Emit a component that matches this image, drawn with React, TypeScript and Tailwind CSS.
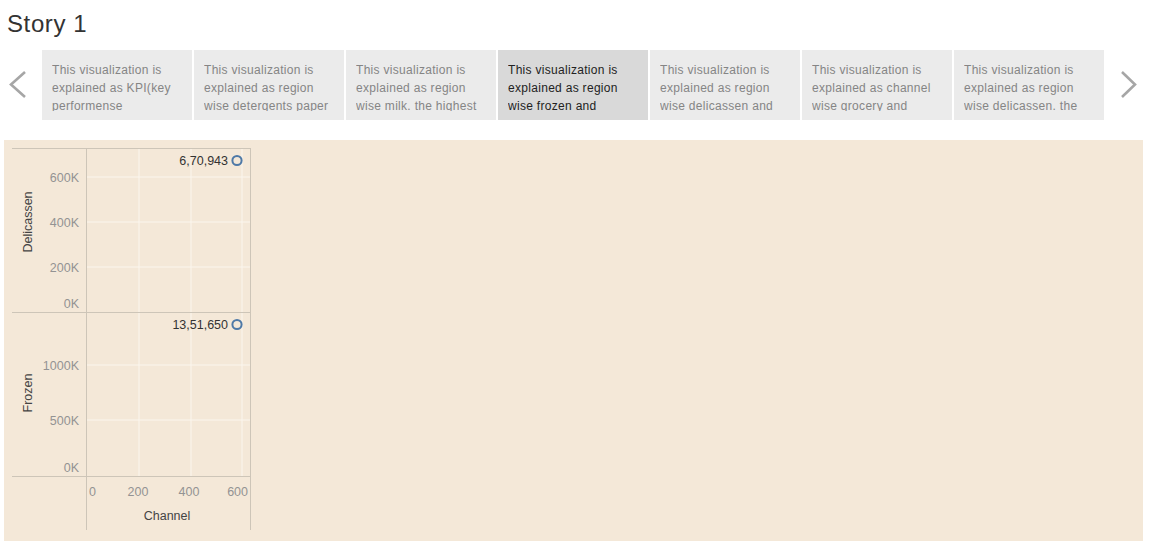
const TABS = [
  "This visualization is explained as KPI(key performense indicators) of the dataset",
  "This visualization is explained as region wise detergents paper and grocery",
  "This visualization is explained as region wise milk. the highest value",
  "This visualization is explained as region wise frozen and delicassen values",
  "This visualization is explained as region wise delicassen and fresh values",
  "This visualization is explained as channel wise grocery and detergents paper values",
  "This visualization is explained as region wise delicassen. the highest",
];

const SELECTED = 3;

function Arrow({ dir }: { dir: "left" | "right" }) {
  return (
    <svg width={18} height={30} viewBox="0 0 18 30" className="block">
      <polyline
        points={dir === "left" ? "16,2 2,14.5 16,27" : "2,2 15,14.5 2,27"}
        fill="none"
        stroke="#a6a6a6"
        strokeWidth={2.6}
      />
    </svg>
  );
}

function Chart() {
  // coordinates are page coords minus the panel origin (4, 140)
  const X = (v: number) => v - 4;
  const Y = (v: number) => v - 140;
  const axis = "#cdc5b8";
  const grid = "#fbf6ee";
  const tick = "#939393";
  const font = "'Liberation Sans', Arial, sans-serif";

  return (
    <svg width={260} height={401} className="block" style={{ fontFamily: font }}>
      {/* white gridlines */}
      {[177, 222, 267, 365, 420].map((y) => (
        <line key={y} x1={X(86)} x2={X(250)} y1={Y(y)} y2={Y(y)} stroke={grid} strokeWidth={1} />
      ))}
      {[139, 191, 242].map((x) => (
        <line key={x} x1={X(x)} x2={X(x)} y1={Y(148)} y2={Y(476)} stroke={grid} strokeWidth={1} />
      ))}

      {/* frame */}
      <line x1={X(12)} x2={X(250)} y1={Y(148.5)} y2={Y(148.5)} stroke={axis} />
      <line x1={X(12)} x2={X(250)} y1={Y(312.5)} y2={Y(312.5)} stroke={axis} />
      <line x1={X(12)} x2={X(250)} y1={Y(476.5)} y2={Y(476.5)} stroke={axis} />
      <line x1={X(86.5)} x2={X(86.5)} y1={Y(148)} y2={Y(530)} stroke={axis} />
      <line x1={X(250.5)} x2={X(250.5)} y1={Y(148)} y2={Y(530)} stroke={axis} />

      {/* y ticks */}
      {[
        ["600K", 177],
        ["400K", 222],
        ["200K", 267],
        ["0K", 303],
        ["1000K", 365],
        ["500K", 420],
        ["0K", 467],
      ].map(([t, y]) => (
        <text key={`${t}-${y}`} x={X(79)} y={Y(Number(y)) + 4.5} textAnchor="end" fontSize={12.5} fill={tick}>
          {t}
        </text>
      ))}

      {/* x ticks */}
      <text x={X(89)} y={Y(491) + 4.5} fontSize={12.5} fill={tick}>0</text>
      <text x={X(138)} y={Y(491) + 4.5} textAnchor="middle" fontSize={12.5} fill={tick}>200</text>
      <text x={X(189)} y={Y(491) + 4.5} textAnchor="middle" fontSize={12.5} fill={tick}>400</text>
      <text x={X(248)} y={Y(491) + 4.5} textAnchor="end" fontSize={12.5} fill={tick}>600</text>

      {/* axis titles */}
      <text x={X(167)} y={Y(515) + 4.5} textAnchor="middle" fontSize={12.5} fill="#444">Channel</text>
      <text transform={`translate(${X(32)}, ${Y(222)}) rotate(-90)`} textAnchor="middle" fontSize={12.5} fill="#444">
        Delicassen
      </text>
      <text transform={`translate(${X(32)}, ${Y(393)}) rotate(-90)`} textAnchor="middle" fontSize={12.5} fill="#444">
        Frozen
      </text>

      {/* marks */}
      <text x={X(228)} y={Y(160) + 4.5} textAnchor="end" fontSize={12.5} fill="#333">6,70,943</text>
      <circle cx={X(237)} cy={Y(160.5)} r={4.6} fill="none" stroke="#4e79a7" strokeWidth={2} />
      <text x={X(228)} y={Y(324) + 4.5} textAnchor="end" fontSize={12.5} fill="#333">13,51,650</text>
      <circle cx={X(237)} cy={Y(324.5)} r={4.6} fill="none" stroke="#4e79a7" strokeWidth={2} />
    </svg>
  );
}

export default function App() {
  return (
    <div className="h-[547px] w-[1151px] overflow-hidden bg-white font-['Liberation_Sans',Arial,sans-serif]">
      <h1 className="pl-[7px] pt-[9px] text-[24px] leading-[30px] tracking-[0.6px] text-[#333333]">Story 1</h1>

      <div className="mt-[11px] flex h-[70px]">
        <div className="flex w-[42px] items-center justify-center pr-[6px]">
          <Arrow dir="left" />
        </div>
        <div className="flex gap-[2px]">
          {TABS.map((t, i) => (
            <div
              key={i}
              className={
                i === SELECTED
                  ? "h-[70px] w-[150px] bg-[#d9d9d9] pl-[10px] pr-[8px] pt-[11px] text-[#222222]"
                  : "h-[70px] w-[150px] bg-[#ebebeb] pl-[10px] pr-[8px] pt-[11px] text-[#858585]"
              }
            >
              <div className="h-[50px] overflow-hidden text-[12px] leading-[18px] tracking-[0.3px]">{t}</div>
            </div>
          ))}
        </div>
        <div className="flex w-[47px] items-center justify-center pl-[2px]">
          <Arrow dir="right" />
        </div>
      </div>

      <div className="ml-[4px] mt-[20px] h-[401px] w-[1139px] bg-[#f4e8d8]">
        <Chart />
      </div>
    </div>
  );
}
